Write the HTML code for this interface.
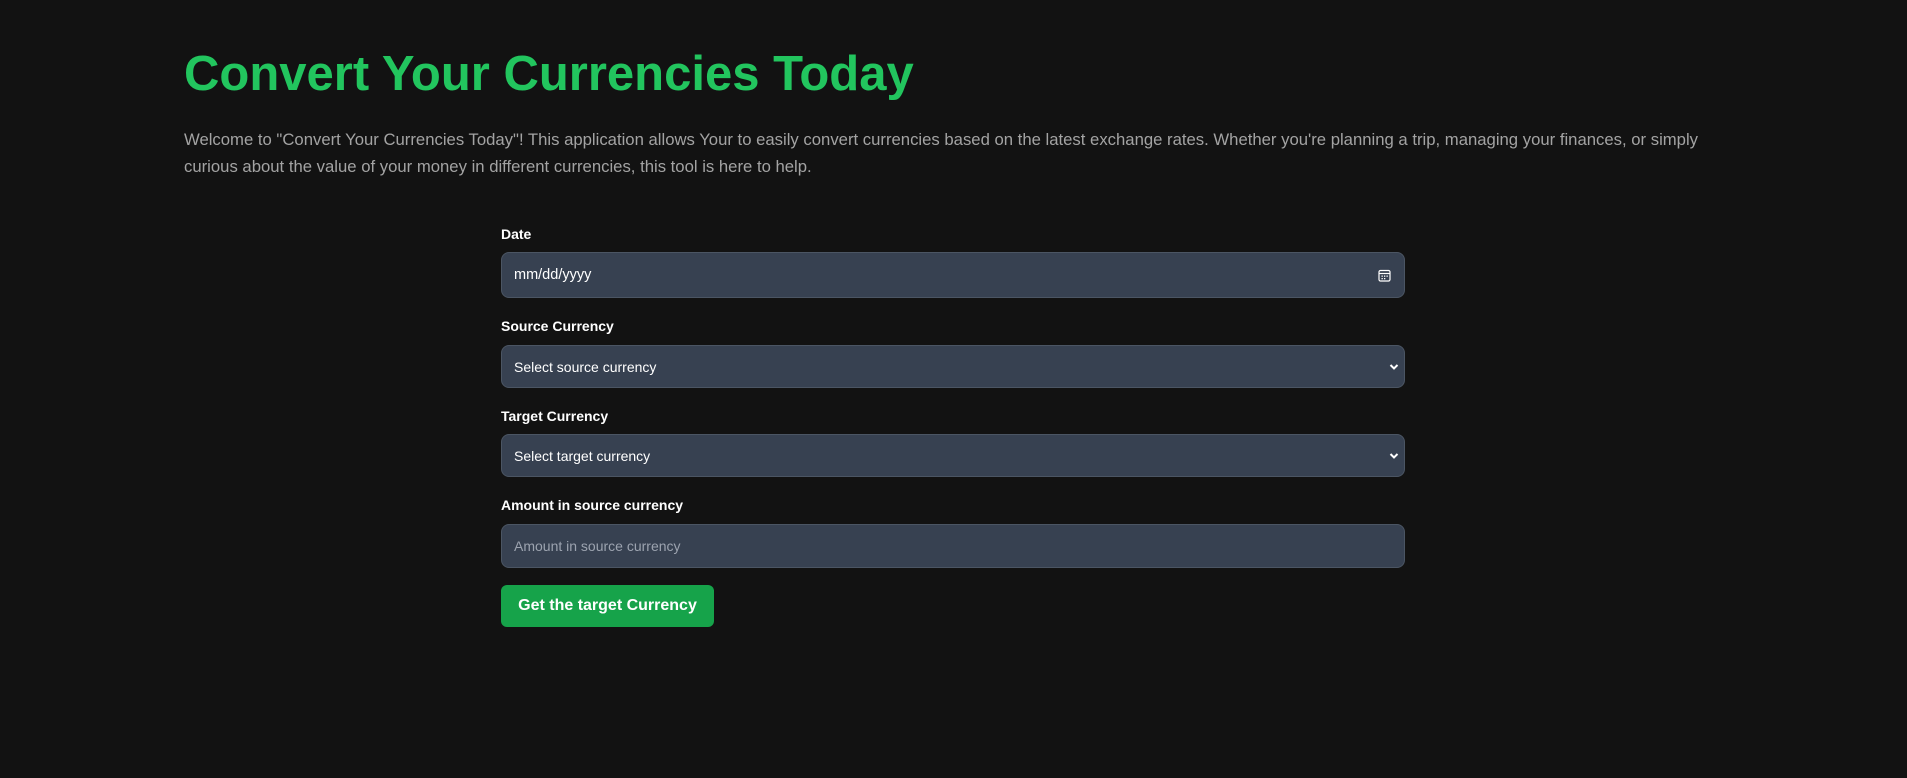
<!DOCTYPE html>
<html><head><meta charset="utf-8"><style>
html,body{margin:0;padding:0;background:#121212;width:1907px;height:778px;overflow:hidden;font-family:"Liberation Sans",sans-serif;}
h1{position:absolute;left:184px;top:44px;margin:0;font-size:49px;font-weight:bold;color:#22c55e;letter-spacing:0px;line-height:60px;white-space:nowrap;}
p.intro{position:absolute;left:184px;top:126px;margin:0;font-size:16.7px;line-height:27px;color:#a3a3a3;white-space:nowrap;}
.lbl{position:absolute;left:501px;font-size:14px;font-weight:bold;color:#fff;}
.box{position:absolute;left:501px;width:904px;background:#374151;border:1px solid #4b5563;border-radius:8px;color:#fff;font-size:14px;box-sizing:border-box;}
.box span{position:absolute;left:12px;top:50%;transform:translateY(-50%);}
.btn{position:absolute;left:501px;top:585px;width:213px;height:42px;background:#16a34a;border-radius:6px;color:#fff;font-weight:bold;font-size:16px;text-align:center;line-height:42px;}
</style></head><body>
<h1>Convert Your Currencies Today</h1>
<p class="intro">Welcome to "Convert Your Currencies Today"! This application allows Your to easily convert currencies based on the latest exchange rates. Whether you're planning a trip, managing your finances, or simply<br>curious about the value of your money in different currencies, this tool is here to help.</p>

<div class="lbl" style="top:226px">Date</div>
<div class="box" style="top:252px;height:46px"><span style="font-size:14.5px">mm/dd/yyyy</span>
<svg style="position:absolute;left:876px;top:16px" width="13" height="13" viewBox="0 0 13 13"><rect x="1" y="1.5" width="11" height="10.5" rx="1.5" fill="none" stroke="#fff" stroke-width="1.2"/><line x1="1" y1="4.5" x2="12" y2="4.5" stroke="#fff" stroke-width="1.2"/><g fill="#fff"><rect x="3.5" y="6.5" width="1.3" height="1.3"/><rect x="6" y="6.5" width="1.3" height="1.3"/><rect x="8.5" y="6.5" width="1.3" height="1.3"/><rect x="3.5" y="9" width="1.3" height="1.3"/><rect x="6" y="9" width="1.3" height="1.3"/></g></svg></div>

<div class="lbl" style="top:318px">Source Currency</div>
<div class="box" style="top:345px;height:43px"><span>Select source currency</span>
<svg style="position:absolute;left:887px;top:17px" width="10" height="8" viewBox="0 0 10 8"><path d="M1.5 2 L5 5.5 L8.5 2" fill="none" stroke="#fff" stroke-width="2"/></svg></div>

<div class="lbl" style="top:408px">Target Currency</div>
<div class="box" style="top:434px;height:43px"><span>Select target currency</span>
<svg style="position:absolute;left:887px;top:17px" width="10" height="8" viewBox="0 0 10 8"><path d="M1.5 2 L5 5.5 L8.5 2" fill="none" stroke="#fff" stroke-width="2"/></svg></div>

<div class="lbl" style="top:497px">Amount in source currency</div>
<div class="box" style="top:524px;height:44px"><span style="color:#9ca3af">Amount in source currency</span></div>

<div class="btn">Get the target Currency</div>
</body></html>
